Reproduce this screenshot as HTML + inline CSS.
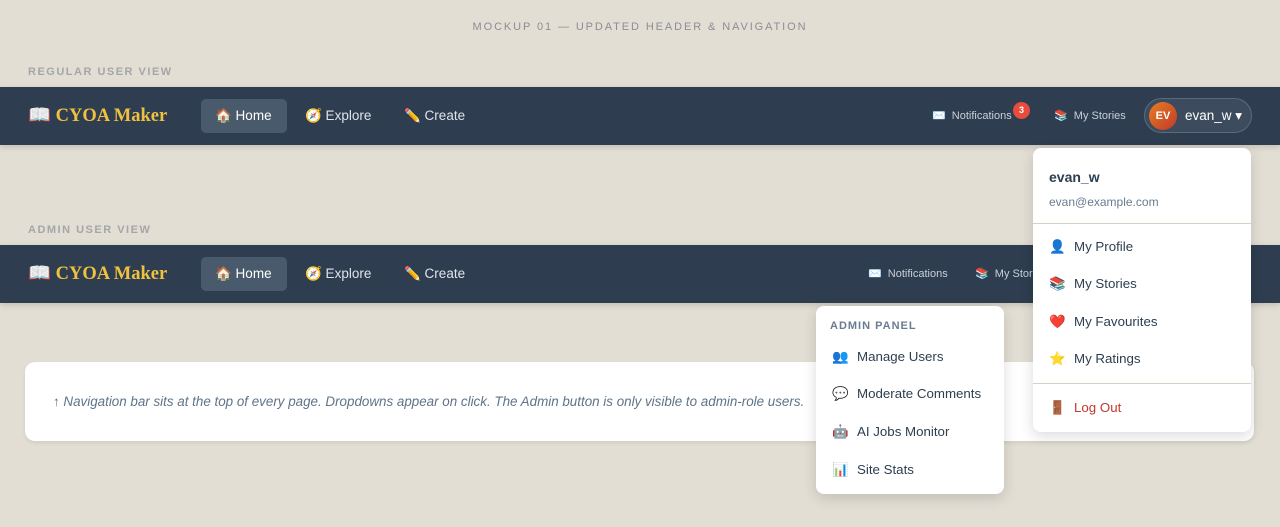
<!DOCTYPE html>
<html><head><meta charset="utf-8"><style>
*{box-sizing:border-box;margin:0;padding:0}
body{width:1280px;height:527px;background:#e2ded4;font-family:"Liberation Sans",sans-serif;position:relative;overflow:hidden}
.abs{position:absolute}
.title{top:21px;left:0;width:1280px;text-align:center;font-size:11px;letter-spacing:1.9px;color:#8a8e94}
.lbl{left:28px;font-size:11px;font-weight:bold;letter-spacing:1.5px;color:#a4a6a8}
.nav{left:0;width:1280px;height:58px;background:#2e3e50;box-shadow:0 2px 6px rgba(0,0,0,.15)}
.logo{left:28px;top:17px;font-family:"Liberation Serif",serif;font-weight:bold;font-size:18.5px;color:#f0c040}
.lk{top:12px;height:34px;line-height:34px;padding:0 14px;font-size:13.5px;color:#dfe4ea;border-radius:5px}
.lk.act{background:#485a6c;color:#fff}
.sm{font-size:11px;color:#c8d0d8;top:22px}
.badge{width:17px;height:17px;border-radius:50%;background:#e74c3c;color:#fff;font-size:9px;font-weight:bold;text-align:center;line-height:17px}
.user{left:1144px;top:11px;width:108px;height:35px;border:1px solid #5a6a7a;border-radius:18px;background:#3c4c5e}
.av{left:4px;top:3px;width:28px;height:28px;border-radius:50%;background:linear-gradient(135deg,#e67e22,#c0392b);color:#fff;font-size:11px;font-weight:bold;text-align:center;line-height:28px}
.dd{background:#fff;border-radius:8px;box-shadow:0 4px 14px rgba(0,0,0,.15)}
.it{position:absolute;left:16px;font-size:13.3px;color:#2c3e50}
.it span{display:inline-block;width:25px}
</style></head><body>
<div class="abs title">MOCKUP 01 — UPDATED HEADER &amp; NAVIGATION</div>
<div class="abs lbl" style="top:66px">REGULAR USER VIEW</div>
<div class="abs nav" style="top:87px">
 <div class="abs logo">📖 CYOA Maker</div>
 <div class="abs lk act" style="left:201px;width:86px">🏠 Home</div>
 <div class="abs lk" style="left:291px">🧭 Explore</div>
 <div class="abs lk" style="left:390px">✏️ Create</div>
 <div class="abs sm" style="left:932px">✉️&nbsp; Notifications</div>
 <div class="abs badge" style="left:1013px;top:15px">3</div>
 <div class="abs sm" style="left:1054px">📚&nbsp; My Stories</div>
 <div class="abs user"><div class="abs av">EV</div><div class="abs" style="left:40px;top:9px;font-size:13.5px;color:#fff">evan_w ▾</div></div>
</div>
<div class="abs lbl" style="top:224px">ADMIN USER VIEW</div>
<div class="abs nav" style="top:245px">
 <div class="abs logo">📖 CYOA Maker</div>
 <div class="abs lk act" style="left:201px;width:86px">🏠 Home</div>
 <div class="abs lk" style="left:291px">🧭 Explore</div>
 <div class="abs lk" style="left:390px">✏️ Create</div>
 <div class="abs sm" style="left:868px">✉️&nbsp; Notifications</div>
 <div class="abs sm" style="left:975px">📚&nbsp; My Stories</div>
</div>
<div class="abs" style="left:25px;top:362px;width:1229px;height:79px;background:#fff;border-radius:10px;box-shadow:0 2px 4px rgba(0,0,0,.08)">
 <div class="abs" style="left:28px;top:32px;font-size:13.4px;font-style:italic;color:#5f7488">↑ Navigation bar sits at the top of every page. Dropdowns appear on click. The Admin button is only visible to admin-role users.</div>
</div>
<div class="abs dd" style="left:816px;top:306px;width:188px;height:188px">
 <div class="abs" style="left:14px;top:14px;font-size:11px;font-weight:bold;letter-spacing:1px;color:#6a7c90">ADMIN PANEL</div>
 <div class="it" style="top:43px"><span>👥</span>Manage Users</div>
 <div class="it" style="top:80px"><span>💬</span>Moderate Comments</div>
 <div class="it" style="top:118px"><span>🤖</span>AI Jobs Monitor</div>
 <div class="it" style="top:156px"><span>📊</span>Site Stats</div>
</div>
<div class="abs dd" style="left:1033px;top:148px;width:218px;height:284px">
 <div class="abs" style="left:16px;top:21px;font-size:14px;font-weight:bold;color:#2c3e50">evan_w</div>
 <div class="abs" style="left:16px;top:47px;font-size:12px;color:#6a7c90">evan@example.com</div>
 <div class="abs" style="left:0;top:75px;width:218px;height:1px;background:#d8cfc4"></div>
 <div class="it" style="top:91px"><span>👤</span>My Profile</div>
 <div class="it" style="top:128px"><span>📚</span>My Stories</div>
 <div class="it" style="top:166px"><span>❤️</span>My Favourites</div>
 <div class="it" style="top:203px"><span>⭐</span>My Ratings</div>
 <div class="abs" style="left:0;top:235px;width:218px;height:1px;background:#d8cfc4"></div>
 <div class="it" style="top:252px;color:#c0392b"><span>🚪</span>Log Out</div>
</div>
</body></html>
